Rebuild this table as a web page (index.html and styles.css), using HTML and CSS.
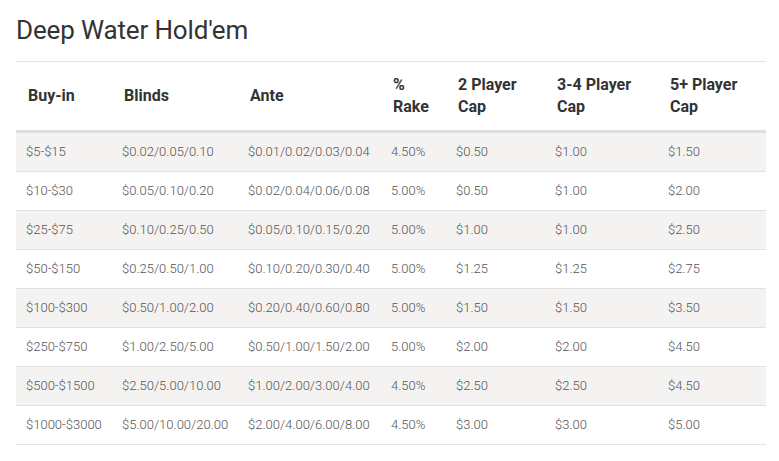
FILE: index.html
```html
<!DOCTYPE html>
<html>
<head>
<meta charset="utf-8">
<link rel="stylesheet" href="styles.css">
</head>
<body>
<div class="page">
  <h2 class="title">Deep Water Hold'em</h2>
  <table class="rake">
    <colgroup>
      <col class="c1"><col class="c2"><col class="c3"><col class="c4"><col class="c5"><col class="c6"><col class="c7">
    </colgroup>
    <thead>
      <tr>
        <th>Buy-in</th>
        <th>Blinds</th>
        <th>Ante</th>
        <th>%<br>Rake</th>
        <th>2 Player<br>Cap</th>
        <th>3-4 Player<br>Cap</th>
        <th>5+ Player<br>Cap</th>
      </tr>
    </thead>
    <tbody>
      <tr><td>$5-$15</td><td>$0.02/0.05/0.10</td><td>$0.01/0.02/0.03/0.04</td><td>4.50%</td><td>$0.50</td><td>$1.00</td><td>$1.50</td></tr>
      <tr><td>$10-$30</td><td>$0.05/0.10/0.20</td><td>$0.02/0.04/0.06/0.08</td><td>5.00%</td><td>$0.50</td><td>$1.00</td><td>$2.00</td></tr>
      <tr><td>$25-$75</td><td>$0.10/0.25/0.50</td><td>$0.05/0.10/0.15/0.20</td><td>5.00%</td><td>$1.00</td><td>$1.00</td><td>$2.50</td></tr>
      <tr><td>$50-$150</td><td>$0.25/0.50/1.00</td><td>$0.10/0.20/0.30/0.40</td><td>5.00%</td><td>$1.25</td><td>$1.25</td><td>$2.75</td></tr>
      <tr><td>$100-$300</td><td>$0.50/1.00/2.00</td><td>$0.20/0.40/0.60/0.80</td><td>5.00%</td><td>$1.50</td><td>$1.50</td><td>$3.50</td></tr>
      <tr><td>$250-$750</td><td>$1.00/2.50/5.00</td><td>$0.50/1.00/1.50/2.00</td><td>5.00%</td><td>$2.00</td><td>$2.00</td><td>$4.50</td></tr>
      <tr><td>$500-$1500</td><td>$2.50/5.00/10.00</td><td>$1.00/2.00/3.00/4.00</td><td>4.50%</td><td>$2.50</td><td>$2.50</td><td>$4.50</td></tr>
      <tr><td>$1000-$3000</td><td>$5.00/10.00/20.00</td><td>$2.00/4.00/6.00/8.00</td><td>4.50%</td><td>$3.00</td><td>$3.00</td><td>$5.00</td></tr>
    </tbody>
  </table>
</div>
</body>
</html>
```

FILE: styles.css
```css
html, body {
  margin: 0;
  padding: 0;
  background: #ffffff;
}
body {
  font-family: Roboto, "Liberation Sans", Arial, sans-serif;
}
.page {
  padding: 0 13px 0 16px;
}
.title {
  margin: 0;
  padding-top: 15px;
  height: 61px;
  box-sizing: border-box;
  font-size: 26px;
  font-weight: 400;
  line-height: 30px;
  color: #333333;
  letter-spacing: -0.15px;
}
.rake {
  width: 750px;
  border-collapse: collapse;
  table-layout: fixed;
  border-top: 1px solid #e2e2e2;
}
.c1 { width: 96px; }
.c2 { width: 126px; }
.c3 { width: 143px; }
.c4 { width: 65px; }
.c5 { width: 99px; }
.c6 { width: 113px; }
.c7 { width: 108px; }
.rake th {
  text-align: left;
  vertical-align: middle;
  font-size: 16px;
  font-weight: 700;
  line-height: 22px;
  color: #333333;
  padding: 12px 12px 12px 12px;
  border-bottom: 3px solid #dddddd;
}
.rake td {
  font-size: 13px;
  font-weight: 300;
  line-height: 18px;
  color: #555555;
  padding: 10px 10px 10px 10px;
  border-bottom: 1px solid #e2e2e2;
  white-space: nowrap;
}
.rake tbody tr:nth-child(odd) td {
  background: #f4f3f1;
}
```
